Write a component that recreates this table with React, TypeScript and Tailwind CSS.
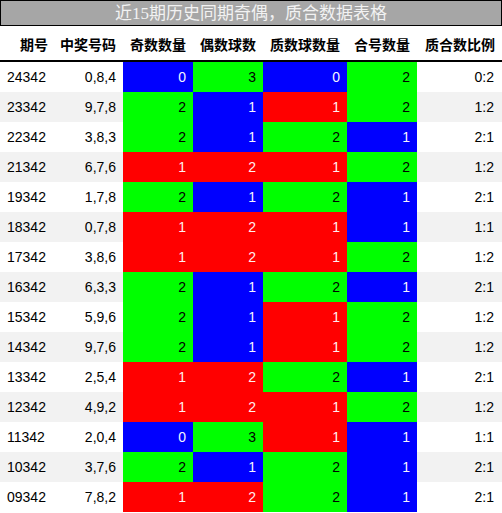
import React from "react";

type C = "b" | "g" | "r";
type Row = [string, string, [string, C], [string, C], [string, C], [string, C], string];

const rows: Row[] = [
  ["24342", "0,8,4", ["0", "b"], ["3", "g"], ["0", "b"], ["2", "g"], "0:2"],
  ["23342", "9,7,8", ["2", "g"], ["1", "b"], ["1", "r"], ["2", "g"], "1:2"],
  ["22342", "3,8,3", ["2", "g"], ["1", "b"], ["2", "g"], ["1", "b"], "2:1"],
  ["21342", "6,7,6", ["1", "r"], ["2", "r"], ["1", "r"], ["2", "g"], "1:2"],
  ["19342", "1,7,8", ["2", "g"], ["1", "b"], ["2", "g"], ["1", "b"], "2:1"],
  ["18342", "0,7,8", ["1", "r"], ["2", "r"], ["1", "r"], ["1", "b"], "1:1"],
  ["17342", "3,8,6", ["1", "r"], ["2", "r"], ["1", "r"], ["2", "g"], "1:2"],
  ["16342", "6,3,3", ["2", "g"], ["1", "b"], ["2", "g"], ["1", "b"], "2:1"],
  ["15342", "5,9,6", ["2", "g"], ["1", "b"], ["1", "r"], ["2", "g"], "1:2"],
  ["14342", "9,7,6", ["2", "g"], ["1", "b"], ["1", "r"], ["2", "g"], "1:2"],
  ["13342", "2,5,4", ["1", "r"], ["2", "r"], ["2", "g"], ["1", "b"], "2:1"],
  ["12342", "4,9,2", ["1", "r"], ["2", "r"], ["1", "r"], ["2", "g"], "1:2"],
  ["11342", "2,0,4", ["0", "b"], ["3", "g"], ["1", "r"], ["1", "b"], "1:1"],
  ["10342", "3,7,6", ["2", "g"], ["1", "b"], ["2", "g"], ["1", "b"], "2:1"],
  ["09342", "7,8,2", ["1", "r"], ["2", "r"], ["2", "g"], ["1", "b"], "2:1"],
];

const colorCls: Record<C, string> = {
  b: "bg-[#0000ff] text-[#f4f4ff]",
  g: "bg-[#00ff00] text-black",
  r: "bg-[#ff0000] text-[#fff0f0]",
};

const headers = ["期号", "中奖号码", "奇数数量", "偶数球数", "质数球数量", "合号数量", "质合数比例"];

const grid = "grid grid-cols-[55px_68px_70px_70px_84px_70px_85px]";

export default function App() {
  return (
    <div className="w-[502px] h-[513px] bg-white overflow-hidden font-['Liberation_Sans','Noto_Sans_CJK_SC',sans-serif]">
      <div className="h-[26px] border border-black bg-[#a6a6a6] flex items-center justify-center text-[17px] leading-none text-[#f2f2f2] font-['Liberation_Serif','Noto_Sans_CJK_SC',serif]">
        近15期历史同期奇偶，质合数据表格
      </div>
      <div className={`${grid} h-[36px] border-b-2 border-black`}>
        {headers.map((h) => (
          <div
            key={h}
            className="flex items-center justify-end pr-[7px] pt-[3px] text-[14px] font-bold text-black font-['Noto_Sans_CJK_SC',sans-serif]"
          >
            {h}
          </div>
        ))}
      </div>
      <div>
        {rows.map((r, i) => (
          <div
            key={r[0]}
            className={`${grid} h-[30px] text-[14px] ${i % 2 === 1 ? "bg-[#f2f2f2]" : "bg-white"} text-black`}
          >
            <div className="flex items-center pl-[7px]">{r[0]}</div>
            <div className="flex items-center justify-end pr-[7px]">{r[1]}</div>
            {[r[2], r[3], r[4], r[5]].map((c, j) => (
              <div key={j} className={`flex items-center justify-end pr-[7px] ${colorCls[c[1]]}`}>
                {c[0]}
              </div>
            ))}
            <div className="flex items-center justify-end pr-[8px]">{r[6]}</div>
          </div>
        ))}
      </div>
    </div>
  );
}
